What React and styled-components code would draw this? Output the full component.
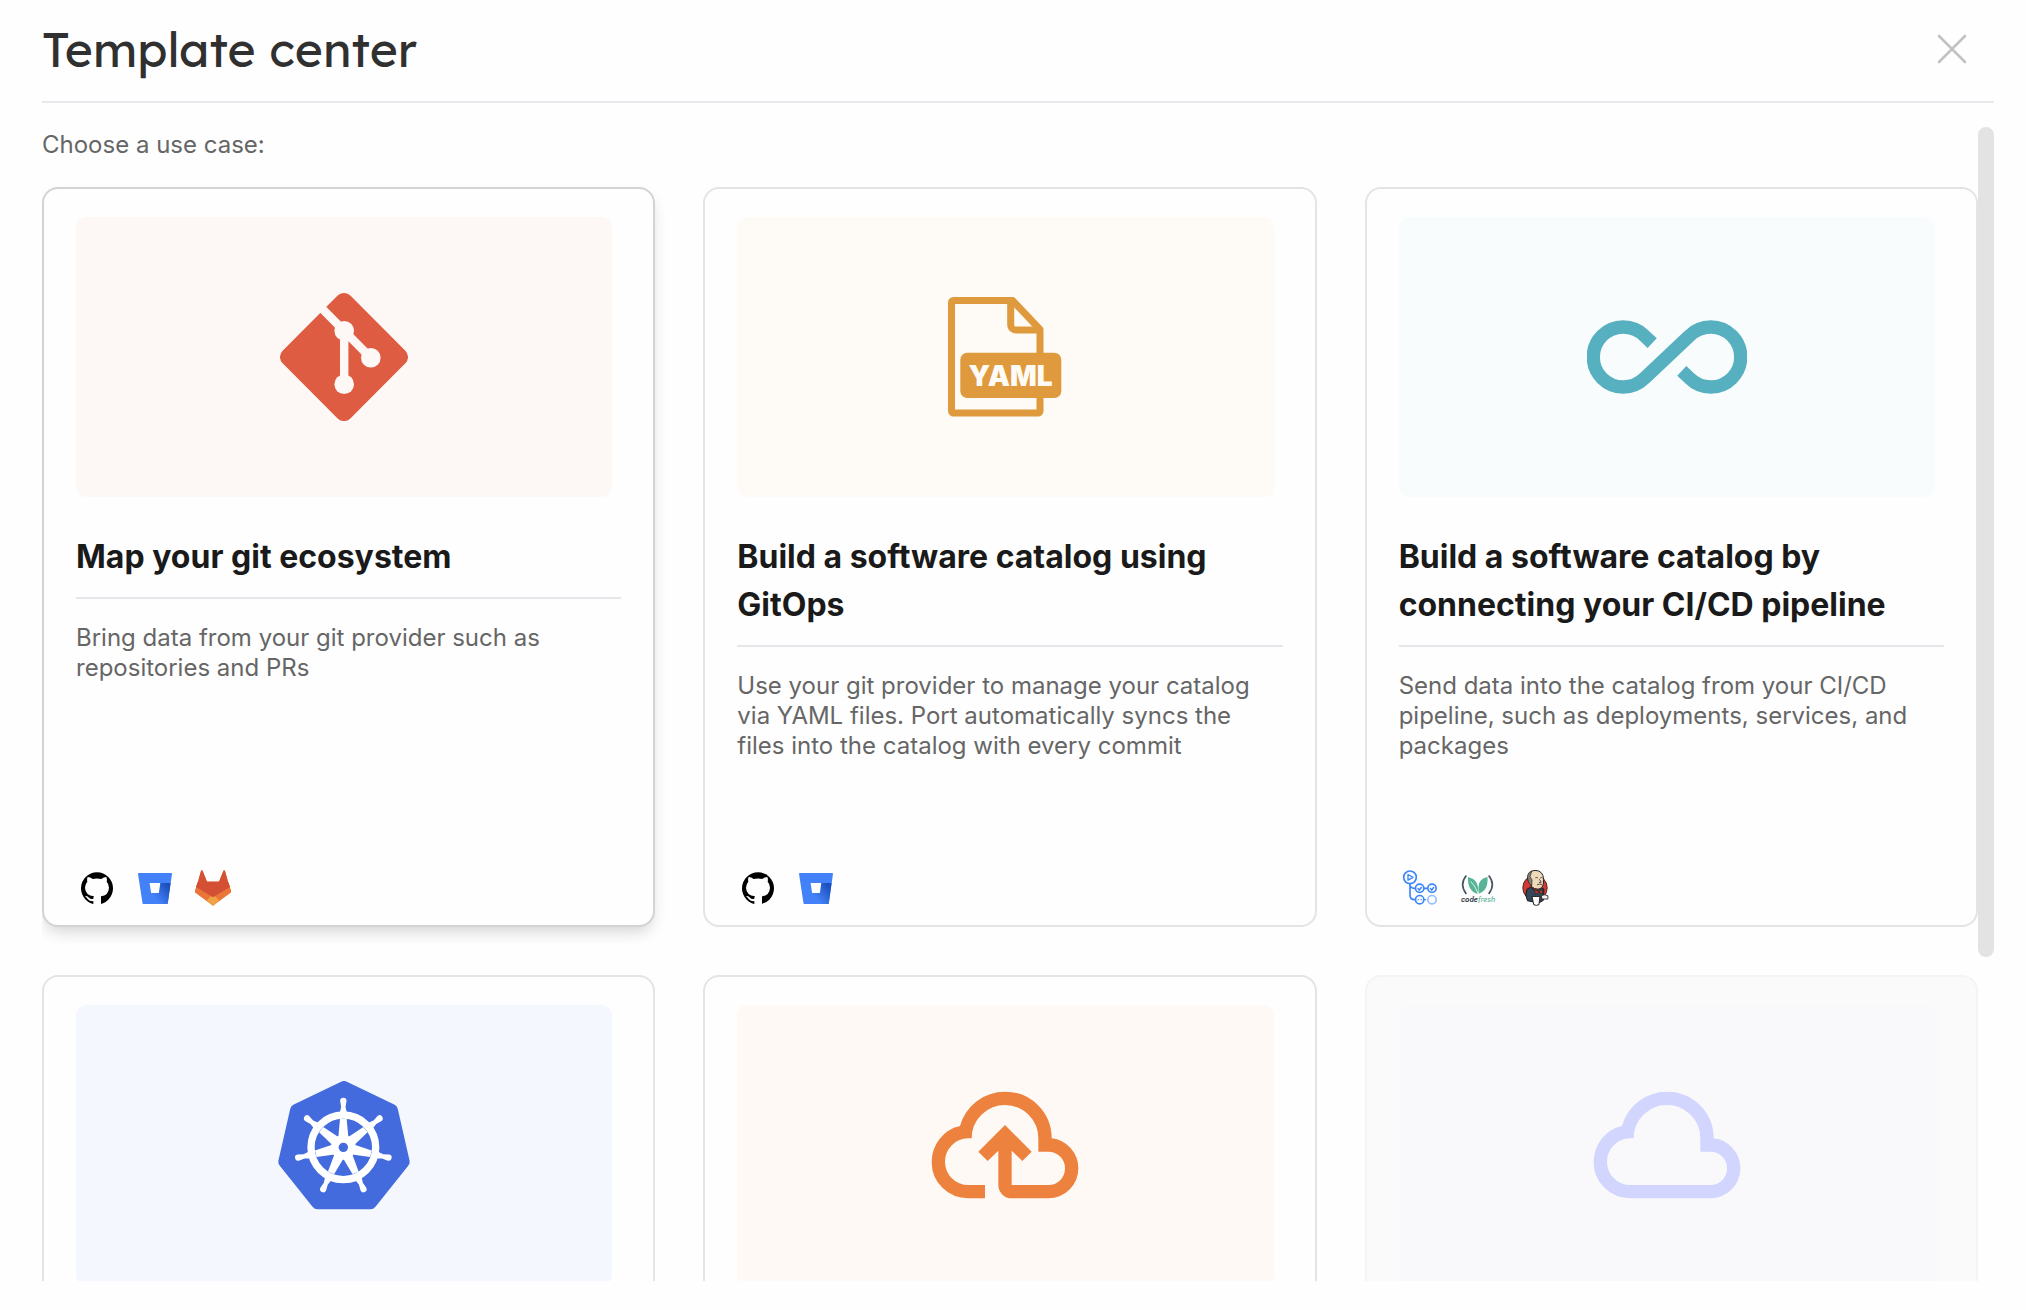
import React, { useEffect, useRef, useState } from "react";
import styled, { createGlobalStyle } from "styled-components";

const GlobalStyle = createGlobalStyle`
  *, *::before, *::after { box-sizing: border-box; }
  body {
    margin: 0;
    background: #fefefe;
    font-family: Inter, "Liberation Sans", sans-serif;
    -webkit-font-smoothing: antialiased;
  }
`;

const Dialog = styled.main`
  display: flex;
  flex-direction: column;
  height: 100vh;
  padding: 0 32px 29px 42px;
`;

const Header = styled.header`
  display: flex;
  align-items: center;
  justify-content: space-between;
  padding: 19px 20px 22px 0;
  border-bottom: 2px solid #e8e8ed;
`;

const Heading = styled.h1`
  margin: 0;
  font-family: Lexend, Inter, sans-serif;
  font-size: 48px;
  line-height: 60px;
  font-weight: 400;
  color: #303030;
`;

const CloseButton = styled.button`
  display: flex;
  align-items: center;
  justify-content: center;
  width: 44px;
  height: 44px;
  padding: 0;
  border: 0;
  background: none;
  color: #c2c2c2;
  cursor: pointer;
`;

const Body = styled.div`
  display: flex;
  flex: 1;
  min-height: 0;
  margin-top: 24px;
`;

const ScrollArea = styled.section`
  flex: 1;
  min-width: 0;
  overflow-y: auto;
  scrollbar-width: none;
  padding-bottom: 16px;
`;

const ScrollTrack = styled.div`
  width: 16px;
  flex: none;
`;

const ScrollThumb = styled.div`
  border-radius: 8px;
  background: #e3e3e3;
`;

const Prompt = styled.p`
  margin: 0 0 24px;
  font-size: 24px;
  line-height: 36px;
  color: #666666;
`;

const CardGrid = styled.div`
  display: grid;
  grid-template-columns: repeat(3, minmax(0, 1fr));
  gap: 48px;
`;

const Card = styled.button`
  display: flex;
  flex-direction: column;
  align-items: stretch;
  min-height: 740px;
  padding: 28px 32px 16px;
  border: 2px solid ${(p) => (p.$active ? "#d2d3d3" : "#e4e4e4")};
  border-radius: 16px;
  background: #fefefe;
  box-shadow: ${(p) => (p.$active ? "0 8px 16px -4px rgba(0, 0, 0, 0.18)" : "none")};
  font: inherit;
  text-align: left;
  cursor: pointer;

  &:disabled {
    border-color: #f4f4f4;
    background: #fafafa;
    cursor: default;
  }
`;

const Banner = styled.span`
  display: flex;
  align-items: center;
  justify-content: center;
  height: 280px;
  margin-right: 9px;
  border-radius: 10px;
  background: ${(p) => p.$tint};
`;

const CardTitle = styled.span`
  display: block;
  margin-top: 36px;
  padding-bottom: 16px;
  border-bottom: 2px solid #e6e6eb;
  font-size: 32px;
  line-height: 48px;
  font-weight: 700;
  color: #1a1a1a;
`;

const CardText = styled.span`
  display: block;
  margin-top: 24px;
  font-size: 24px;
  line-height: 30px;
  color: #666666;
`;

const ProviderRow = styled.span`
  display: flex;
  gap: 16px;
  margin-top: auto;
`;

const Provider = styled.span`
  display: flex;
  align-items: center;
  justify-content: center;
  width: 42px;
  height: 42px;
  color: #000000;
`;

const CloseIcon = () => (
  <svg width="30" height="30" viewBox="0 0 30 30" fill="none" stroke="currentColor" strokeWidth="2.6" strokeLinecap="round" aria-hidden="true">
    <path d="M2 2 28 28M28 2 2 28" />
  </svg>
);

const GitArt = ({ tint }) => (
  <svg width="128" height="128" viewBox="0 0 128 128" aria-hidden="true">
    <rect x="16.1" y="16.1" width="95.8" height="95.8" rx="9" fill="#de5c41" transform="rotate(45 64 64)" />
    <g stroke={tint} strokeWidth="8.4" fill="none">
      <path d="M38 11.5 90.7 64.7M64.2 38V91" />
    </g>
    <g fill={tint}>
      <circle cx="64.2" cy="37.8" r="9.8" />
      <circle cx="90.8" cy="64.7" r="9.8" />
      <circle cx="64.2" cy="91.3" r="9.8" />
    </g>
  </svg>
);

const YamlArt = ({ tint }) => (
  <svg width="114" height="120" viewBox="0 0 114 120" aria-hidden="true">
    <g fill="none" stroke="#de9a3d" strokeWidth="7" strokeLinejoin="round">
      <path d="M64.5 3.5H5.5a2 2 0 0 0-2 2V114a2 2 0 0 0 2 2H90a2 2 0 0 0 2-2V32.5Z" />
      <path d="M62.7 3.5V28a5 5 0 0 0 5 5H92" />
    </g>
    <rect x="12.3" y="55.7" width="101" height="45.4" rx="7" fill="#de9a3d" />
    <text x="62.5" y="88.7" textAnchor="middle" fill={tint} fontFamily="Inter, sans-serif" fontWeight="900" fontSize="28">
      YAML
    </text>
  </svg>
);

const PipelineArt = () => (
  <svg width="160" height="74" viewBox="0 0 160 73.4" fill="none" stroke="#57b0bf" strokeWidth="13.3" aria-hidden="true">
    <path d="M65.2 22.8 57.4 15.4A30 30 0 1 0 57.4 58L102.6 15.4A30 30 0 1 1 102.6 58L94.8 50.6" />
  </svg>
);

const SPOKES = [0, 1, 2, 3, 4, 5, 6].map((i) => (i * 360) / 7);

const KubernetesArt = () => (
  <svg width="132" height="129" viewBox="54 62 396 387" aria-hidden="true">
    <path
      d="M252 82 393.9 150.4 429 303.9 330.8 427H173.2L75 303.9 110.1 150.4Z"
      fill="#436bde"
      stroke="#436bde"
      strokeWidth="40"
      strokeLinejoin="round"
    />
    <circle cx="250" cy="261" r="97" fill="none" stroke="#fff" strokeWidth="22" />
    <circle cx="250" cy="261" r="37" fill="#fff" />
    {SPOKES.map((angle) => (
      <g key={angle} transform={`rotate(${angle} 250 261)`} fill="#fff">
        <path d="M240 176 235 230H265L260 176Z" />
        <path d="M239 158 243.5 140 240.500 122a9.500 9.500 0 0 1 19 0L256.500 140 261 158Z" />
      </g>
    ))}
    <circle cx="250" cy="261" r="14" fill="#436bde" />
  </svg>
);

const CloudUploadArt = () => (
  <svg width="160" height="160" viewBox="0 -960 960 960" fill="#ed813e" aria-hidden="true">
    <path d="M260-160q-91 0-155.500-63T40-377q0-78 47-139t123-78q25-92 100-149t170-57q117 0 198.500 81.500T760-520q69 8 114.500 59.500T920-340q0 75-52.500 127.500T740-160H520q-33 0-56.500-23.500T440-240v-206l-64 62-56-56 160-160 160 160-56 56-64-62v206h220q42 0 71-29t29-71q0-42-29-71t-71-29h-60v-80q0-83-58.500-141.500T480-720q-83 0-141.500 58.500T280-520h-20q-58 0-99 41t-41 99q0 58 41 99t99 41h100v80H260Z" />
  </svg>
);

const CloudArt = () => (
  <svg width="160" height="160" viewBox="0 -960 960 960" fill="#d2d5fd" aria-hidden="true">
    <path d="M260-160q-91 0-155.500-63T40-377q0-78 47-139t123-78q25-92 100-149t170-57q117 0 198.500 81.500T760-520q69 8 114.500 59.500T920-340q0 75-52.500 127.500T740-160H260Zm0-80h480q42 0 71-29t29-71q0-42-29-71t-71-29h-60v-80q0-83-58.500-141.500T480-720q-83 0-141.500 58.500T280-520h-20q-58 0-99 41t-41 99q0 58 41 99t99 41Z" />
  </svg>
);

const GithubIcon = () => (
  <svg width="32" height="33" viewBox="33 32 96 99" aria-hidden="true">
    <circle cx="81" cy="81" r="48" fill="currentColor" />
    <path
      d="M53 47Q61 47 68 53Q81 50 94 53Q101 47 109 47Q112 54 110 61Q117 68 117 79Q116 102 93 105V132H70V119Q58 121 53 113Q49 107 45 105Q51 102 57 109Q62 115 70 112Q70 107 72 105Q46 102 45 79Q45 68 52 61Q50 54 53 47Z"
      fill="#fefefe"
    />
  </svg>
);

const BitbucketIcon = () => (
  <svg width="34" height="31" viewBox="0 0 34 31" aria-hidden="true">
    <defs>
      <linearGradient id="bucketShade" x1="31" y1="11" x2="16" y2="23" gradientUnits="userSpaceOnUse">
        <stop offset="0.1" stopColor="#1c4fbd" />
        <stop offset="1" stopColor="#4381f8" />
      </linearGradient>
    </defs>
    <path d="M0.700 0H33.300a.7.7 0 0 1 .7.8L29.800 30.300a.8.8 0 0 1-.8.700H5.500a1 1 0 0 1-1-.8L0 .8A.7.7 0 0 1 .7 0Z" fill="#4381f8" />
    <path d="M22 10H32.600L29.800 30.300a.8.8 0 0 1-.8.700H5.500L13 20h8Z" fill="url(#bucketShade)" />
    <path d="M11.600 10H22.300L20.800 20H13.100Z" fill="#fff" />
  </svg>
);

const GitlabIcon = () => (
  <svg width="36" height="36" viewBox="375 27 108 108" aria-hidden="true">
    <path d="M429 134 376 95Q374 92 375 88L384 62 393 30Q395.500 25 398 30L411 62H447L460 30Q462.500 25 465 30L474 62 483 88Q484 92 482 95Z" fill="#eb7439" />
    <path d="M384 62 393 30Q395.500 25 398 30L411 62H447L460 30Q462.500 25 465 30L474 62 480 78 429 110 378 78Z" fill="#d35035" />
    <path d="M429 99 448 118 429 134 410 118Z" fill="#f0a343" />
    <path d="M378 78 410 118 429 99ZM480 78 448 118 429 99Z" fill="#eb7439" />
    <path d="M384 62 474 62 480 78 429 109 378 78Z" fill="#d35035" />
  </svg>
);

const GithubActionsIcon = () => (
  <svg width="36" height="36" viewBox="36 26 108 108" fill="none" stroke="#3d86f8" strokeWidth="5" aria-hidden="true">
    <circle cx="60" cy="48" r="19" />
    <path d="M54 39.500 69 48 54 56.500Z" strokeWidth="4" strokeLinejoin="round" />
    <path d="M60 67V101Q60 115 74 115H76M60 72Q62 81 76 81M102 81H113" />
    <circle cx="89" cy="81" r="12.500" />
    <circle cx="126" cy="81" r="12.500" />
    <path d="M83 81 88 86 95 77M120 81 125 86 132 77" strokeWidth="4.500" />
    <circle cx="89" cy="115" r="12.500" />
    <path d="M82.500 115H86M92 115H95.500M102 115H108" strokeWidth="4" />
    <circle cx="126" cy="115" r="12.500" stroke="#93bdfc" />
  </svg>
);

const CodefreshIcon = () => (
  <svg width="36" height="30" viewBox="0 0 36 30" aria-hidden="true">
    <path d="M6.300 2.500Q-1 11.500 6.300 21M28.700 2.500Q36 11.500 28.700 21" fill="none" stroke="#4c5660" strokeWidth="1.700" />
    <path d="M8 4C16 6 18.800 11 18.300 21C10.500 19.500 7.500 13 8 4Z" fill="#58b497" />
    <path d="M27.500 4C20 5.500 17.200 10.500 19 20.500C26 18 28 12.500 27.500 4Z" fill="#58b497" />
    <path d="M10.500 8.500C14 11.500 16.500 16 18.500 22" fill="none" stroke="#fff" strokeWidth=".8" />
    <text x="1" y="28.500" fontFamily="Inter, sans-serif" fontSize="7" fontWeight="700" fontStyle="italic" fill="#3a444e">
      code<tspan fill="#58b497" fontWeight="500">fresh</tspan>
    </text>
  </svg>
);

const JenkinsIcon = () => (
  <svg width="28" height="36" viewBox="398 26 84 109" aria-hidden="true">
    <ellipse cx="437" cy="80" rx="37" ry="38" fill="#d33a31" stroke="#3a1a18" strokeWidth="2.500" />
    <path d="M413 84 424 78 440 90 456 80 464 84 462 118 448 126 414 119 409 100Z" fill="#33475b" stroke="#16191d" strokeWidth="3" />
    <path d="M416 56Q412 29 437 27Q462 28 463 54L462 70Q460 83 447 84Q434 84 426 76L424 66Q417 66 416 56Z" fill="#eed9ba" stroke="#231f20" strokeWidth="3" />
    <path d="M416 58Q410 34 427 30L422 46 428 56 427 74Q418 68 416 58Z" fill="#85807a" stroke="#231f20" strokeWidth="2" />
    <path d="M438 50Q442 47 446 50M453 50Q457 48 460 50M450 54 456 63 449 64M443 71Q451 66 459 71" fill="none" stroke="#5a4a40" strokeWidth="3" />
    <path d="M436 86 449 92 460 85 459 98 449 94 438 99Z" fill="#d33a31" stroke="#231f20" strokeWidth="2" />
    <path d="M428 106H452L449 131Q441 135 433 131Z" fill="#fff" stroke="#231f20" strokeWidth="3" />
    <path d="M456 104Q466 98 476 104L476 114H458Z" fill="#f5f0ea" stroke="#231f20" strokeWidth="2.500" />
  </svg>
);

const USE_CASES = [
  {
    id: "git",
    tint: "#fdf8f5",
    Art: GitArt,
    title: "Map your git ecosystem",
    text: "Bring data from your git provider such as repositories and PRs",
    providers: [GithubIcon, BitbucketIcon, GitlabIcon],
    active: true,
  },
  {
    id: "gitops",
    tint: "#fefaf5",
    Art: YamlArt,
    title: "Build a software catalog using GitOps",
    text: "Use your git provider to manage your catalog via YAML files. Port automatically syncs the files into the catalog with every commit",
    providers: [GithubIcon, BitbucketIcon],
  },
  {
    id: "pipeline",
    tint: "#f8fcfd",
    Art: PipelineArt,
    title: "Build a software catalog by connecting your CI/CD pipeline",
    text: "Send data into the catalog from your CI/CD pipeline, such as deployments, services, and packages",
    providers: [GithubActionsIcon, CodefreshIcon, JenkinsIcon],
  },
  { id: "kubernetes", tint: "#f4f7fe", Art: KubernetesArt },
  { id: "cloud-upload", tint: "#fef9f5", Art: CloudUploadArt },
  { id: "cloud", tint: "#f9f9fc", Art: CloudArt, disabled: true },
];

function UseCaseCard({ useCase }) {
  const { tint, Art, title, text, providers, active, disabled } = useCase;
  return (
    <Card type="button" $active={active} disabled={disabled}>
      <Banner $tint={tint}>
        <Art tint={tint} />
      </Banner>
      {title && <CardTitle>{title}</CardTitle>}
      {text && <CardText>{text}</CardText>}
      {providers && (
        <ProviderRow>
          {providers.map((Icon, i) => (
            <Provider key={i}>
              <Icon />
            </Provider>
          ))}
        </ProviderRow>
      )}
    </Card>
  );
}

export default function App() {
  const areaRef = useRef(null);
  const [thumb, setThumb] = useState({ size: 0, start: 0 });

  useEffect(() => {
    const area = areaRef.current;
    const measure = () => {
      const ratio = area.clientHeight / area.scrollHeight;
      setThumb({
        size: ratio < 1 ? Math.round(area.clientHeight * ratio) : 0,
        start: Math.round(area.scrollTop * ratio),
      });
    };
    measure();
    area.addEventListener("scroll", measure);
    window.addEventListener("resize", measure);
    return () => {
      area.removeEventListener("scroll", measure);
      window.removeEventListener("resize", measure);
    };
  }, []);

  return (
    <>
      <GlobalStyle />
      <Dialog>
        <Header>
          <Heading>Template center</Heading>
          <CloseButton type="button" aria-label="Close">
            <CloseIcon />
          </CloseButton>
        </Header>
        <Body>
          <ScrollArea ref={areaRef}>
            <Prompt>Choose a use case:</Prompt>
            <CardGrid>
              {USE_CASES.map((useCase) => (
                <UseCaseCard key={useCase.id} useCase={useCase} />
              ))}
            </CardGrid>
          </ScrollArea>
          <ScrollTrack>
            <ScrollThumb style={{ height: thumb.size, marginTop: thumb.start }} />
          </ScrollTrack>
        </Body>
      </Dialog>
    </>
  );
}
